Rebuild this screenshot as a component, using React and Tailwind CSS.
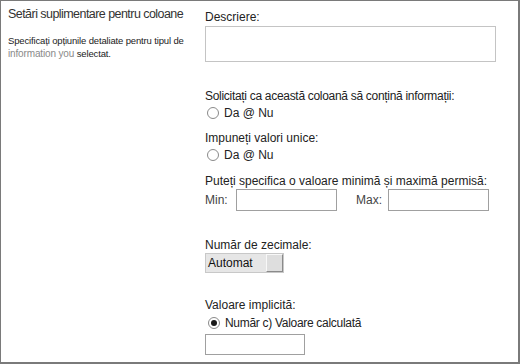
import React from "react";

function Radio({ checked }) {
  return (
    <span className="inline-flex h-[12px] w-[12px] items-center justify-center rounded-full border border-[#8a8a8a] bg-white">
      {checked && <span className="h-[6px] w-[6px] rounded-full bg-[#1a1a1a]" />}
    </span>
  );
}

export default function App() {
  const font = { fontFamily: '"Liberation Sans", Arial, sans-serif' };
  return (
    <div
      className="flex h-[364px] w-[520px] border-l border-t border-r-2 border-b-2 border-[#7a7a7a] bg-white text-[#222]"
      style={font}
    >
      <div className="w-[196px] pl-[7px] pt-[5px]">
        <div className="whitespace-nowrap text-[12.5px] leading-[16px] tracking-[-0.55px] text-[#333]">Setări suplimentare pentru coloane</div>
        <div className="mt-[12px] text-[9.5px] leading-[13px] tracking-[-0.15px]">
          <div className="whitespace-nowrap">Specificați opțiunile detaliate pentru tipul de</div>
          <div>
            <span className="text-[#8a8a8a] text-[10px]">information you </span>
            <span>selectat.</span>
          </div>
        </div>
      </div>
      <div className="flex flex-1 flex-col pl-[8px] pt-[9px] text-[12px] leading-[14px]">
        <div>Descriere:</div>
        <div className="mt-[2px] h-[36px] w-[291px] border border-[#c4c4c4]" />

        <div className="mt-[27px] whitespace-nowrap tracking-[-0.3px]">Solicitați ca această coloană să conțină informații:</div>
        <div className="mt-[2px] flex h-[16px] items-center gap-[5px] pl-[2px]">
          <Radio />
          <span>Da @ Nu</span>
        </div>

        <div className="mt-[10px]">Impuneți valori unice:</div>
        <div className="mt-[2px] flex h-[16px] items-center gap-[5px] pl-[2px]">
          <Radio />
          <span>Da @ Nu</span>
        </div>

        <div className="mt-[11px]">Puteți specifica o valoare minimă și maximă permisă:</div>
        <div className="mt-[1px] flex h-[22px] items-center">
          <span className="w-[31px] text-[#444]">Min:</span>
          <div className="h-[22px] w-[101px] border border-[#a0a0a0]" />
          <span className="ml-[19px] w-[32px] text-[#444]">Max:</span>
          <div className="h-[22px] w-[101px] border border-[#a0a0a0]" />
        </div>

        <div className="mt-[27px]">Număr de zecimale:</div>
        <div className="mt-[1px] flex h-[20px] w-[79px] border border-[#c8c8c8] bg-[#e6e6e6]">
          <span className="flex-1 pl-[2px] leading-[18px] text-[#111]">Automat</span>
          <span className="w-[17px] border-l border-t border-l-[#f8f8f8] border-t-[#f8f8f8] border-r border-b border-r-[#8a8a8a] border-b-[#8a8a8a] bg-[#dedede]" />
        </div>

        <div className="mt-[25px]">Valoare implicită:</div>
        <div className="mt-[3px] flex h-[16px] items-center gap-[5px] pl-[3px]">
          <Radio checked />
          <span className="whitespace-nowrap tracking-[-0.3px]">Număr c) Valoare calculată</span>
        </div>
        <div className="mt-[3px] h-[21px] w-[100px] border border-[#a0a0a0]" />
      </div>
    </div>
  );
}
